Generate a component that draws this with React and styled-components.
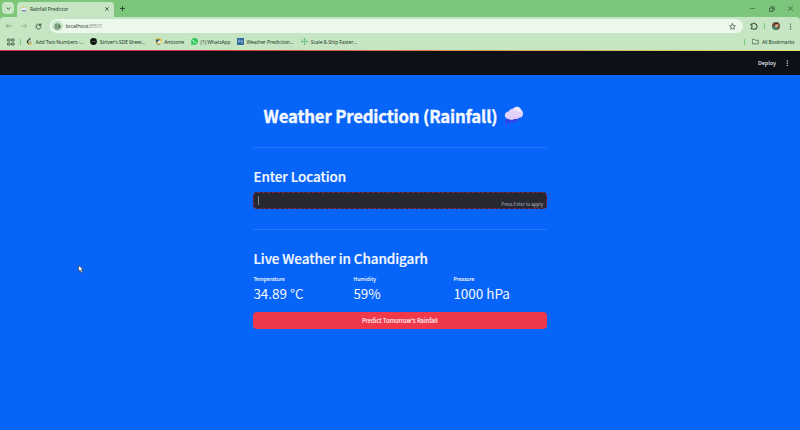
import React from "react";
import styled, { createGlobalStyle } from "styled-components";

const Global = createGlobalStyle`
  * { box-sizing: border-box; }
  html, body { margin: 0; background: #0664f8; }
  body { width: 800px; height: 430px; overflow: hidden; }
  h1, h2 { margin: 0; }
  svg { display: block; flex: none; }
`;
const ui = `"Open Sans", "Noto Sans", sans-serif`;
const source = `"Noto Sans CJK JP", "Noto Sans CJK SC", sans-serif`;

const Page = styled.div`
  width: 800px; height: 430px; display: flex; flex-direction: column;
  background: #0664f8; overflow: hidden; position: relative;
`;
const TabStrip = styled.div`
  height: 17px; flex: none; display: flex; background: #7cc67c;
`;
const TabMenu = styled.div`
  width: 12px; height: 12px; margin: 2px 0 0 2px; border-radius: 4px; background: #c5e7c4;
  display: flex; align-items: center; justify-content: center;
`;
const Tab = styled.div`
  width: 97px; height: 15px; margin: 2px 0 0 3px; padding: 0 5px 2px 4px;
  border-radius: 4px 4px 0 0; background: #c5e5c3; display: flex; align-items: center;
`;
const Label = styled.span`
  font: 400 5.1px/8px ${ui}; color: #223323; white-space: nowrap;
  width: ${(p) => p.$w}px; margin-left: ${(p) => p.$gap || 0}px;
  letter-spacing: -0.13px; flex: none;
`;
const TabTitle = styled(Label)`flex: 1;`;
const NewTab = styled.div`margin: 5.5px 0 0 6px;`;
const WindowControls = styled.div`
  margin: 4.5px 7px 0 auto; height: 8px; display: flex; gap: 13.5px; align-items: center;
`;
const Toolbar = styled.div`
  height: 18px; flex: none; background: #c5e5c3; border-radius: 4px 4px 0 0;
  display: flex; align-items: center; padding: 0 6px 0 5px;
`;
const ToolbarBack = styled.div`background: #7cc67c; flex: none;`;
const NavButtons = styled.div`display: flex; gap: 7px; width: 45px; align-items: center;`;
const AddressBar = styled.div`
  width: 692.5px; height: 14.5px; border-radius: 8px; background: #edf8ed;
  display: flex; align-items: center; padding: 0 6.5px 0 2px;
`;
const SiteInfo = styled.div`
  width: 10.5px; height: 10.5px; border-radius: 50%; background: #c0e4c0;
  display: flex; align-items: center; justify-content: center;
`;
const Url = styled.span`
  font: 400 5.7px/9px ${ui}; color: #2c382c; margin-left: 3px; flex: 1; letter-spacing: -0.1px;
`;
const Port = styled.span`color: #7d8c7d;`;
const ToolActions = styled.div`
  flex: 1; display: flex; align-items: center; padding-left: 7px;
`;
const Avatar = styled.div`margin: 0 auto 0 0;`;
const Divider = styled.div`
  width: 1px; height: 6px; background: #79cc79; flex: none; margin: 0 ${(p) => p.$m || 0}px;
`;
const Bookmarks = styled.div`
  height: 15px; flex: none; background: #c5e5c3; display: flex; align-items: center;
  padding: 0 6px 2px 7px;
`;
const BookmarkGroup = styled.div`display: flex; align-items: center; margin-left: auto;`;
const LoadBar = styled.div`
  height: 1px; flex: none;
  background: linear-gradient(90deg, #d0303c 0 25%, #d75a40 40%, #d9a650 65%, #e4e66c);
`;
const AppHeader = styled.div`
  height: 24px; flex: none; background: #0d1117; color: #e8eaed;
  display: flex; align-items: center; justify-content: flex-end; padding-right: 10px;
  font: 500 5.4px/8px ${source};
`;
const MenuDots = styled.div`margin-left: 7.5px;`;
const Main = styled.main`
  width: 293.5px; margin-left: 253px; color: #f4f8ff; font-family: ${source};
  display: flex; flex-direction: column;
`;
const Title = styled.h1`
  height: 26px; margin-top: 28px; display: flex; align-items: center; padding-left: 10.5px;
  font-size: 16.8px; font-weight: 700; line-height: 26px; white-space: nowrap;
`;
const TitleText = styled.span`
  width: 240px; letter-spacing: -0.18px; -webkit-text-stroke: 0.35px currentColor;
`;
const TitleIcon = styled.div`margin-bottom: 3px;`;
const Rule = styled.div`height: 1px; background: #2277f6; margin-top: ${(p) => p.$top}px;`;
const Heading = styled.h2`
  height: 20px; margin-top: ${(p) => p.$top}px; font-size: 13.5px; font-weight: 500;
  line-height: 20px; white-space: nowrap; letter-spacing: -0.08px; padding-left: 0.4px;
  -webkit-text-stroke: 0.2px currentColor;
`;
const Input = styled.div`
  height: 17px; margin-top: 6px; border: 1px dashed #82204f; border-radius: 4px;
  background: #262730; display: flex; justify-content: space-between; padding: 0 2.5px 0 4px;
`;
const Caret = styled.div`width: 1.3px; height: 9px; margin-top: 3px; background: #85878e;`;
const Hint = styled.span`
  margin-top: 7px; font: 400 4.5px/8px ${source}; color: #b7b9c1;
`;
const Metrics = styled.div`
  display: grid; grid-template-columns: 100px 100px 1fr; height: 33px; margin-top: 6px;
  padding-left: 0.4px;
`;
const MetricLabel = styled.div`
  font-size: 5.2px; line-height: 10px; font-weight: 400; -webkit-text-stroke: 0.1px currentColor;
`;
const MetricValue = styled.div`
  font-size: 13.5px; line-height: 19px; font-weight: 400; white-space: nowrap;
  letter-spacing: -0.03px;
`;
const Button = styled.div`
  height: 17px; margin-top: 5px; border-radius: 4px; background: #ef394a; color: #fff;
  text-align: center; font-size: 5.9px; line-height: 17px; font-weight: 400;
  -webkit-text-stroke: 0.1px currentColor;
`;
const Cursor = styled.div`position: absolute; left: 78px; top: 265px;`;

const Icon = ({ w = 8, h = w, box = "0 0 24 24", sw = 2.4, color = "#304330", children }) => (
  <svg width={w} height={h} viewBox={box} fill="none" stroke={color} strokeWidth={sw}
    strokeLinecap="round" strokeLinejoin="round">{children}</svg>
);
const Dots = ({ color, w = 7 }) => (
  <svg width={w} height={w} viewBox="0 0 7 7" fill={color}>
    <circle cx="3.5" cy="1.1" r=".7" /><circle cx="3.5" cy="3.5" r=".7" /><circle cx="3.5" cy="5.9" r=".7" />
  </svg>
);
const RainCloud = ({ w, h }) => (
  <svg width={w} height={h} viewBox="0 0 20 18">
    <g stroke="#512bd8" strokeWidth="1.7" strokeLinecap="round">
      <path d="M3.8 12.8 2.4 16.6M7.1 13 5.8 16.3M10.6 13.2 9.5 16M13.7 12.5 12.8 14.5" />
    </g>
    <path d="M5 13.2C2.4 13.2.8 11.4.8 9.3c0-2.2 1.7-3.8 3.9-3.9C5.6 3.2 7.4 2.5 9 2.8 10 1.3 11.6.6 13.3.8c2.2.2 3.7 1.6 4.1 3.5 1.2.8 1.8 2 1.7 3.4-.1 2.3-1.7 4-4 4.1-1.2 1.2-2.7 1.5-4.2 1-1.7 1.1-3.8 1.2-5.9.4Z" fill="#e2d3f8" />
    <path d="M9.3 3.2c1.3-2 4.6-2.6 6.5-.8 1.4 1.2 1.3 2.6 1.1 3.6-2 .8-3.2-.5-4.2-1.1Z" fill="#f0e8fd" />
    <path d="M2 11c2.3 1.6 4.8 0 5.8-1.6 1.6 2.5 5 2.5 7.2.3" fill="none" stroke="#d3c0f1" strokeWidth=".8" />
  </svg>
);
const TabCloud = () => (
  <svg width="6" height="6" viewBox="0 0 12 12">
    <circle cx="5" cy="3.5" r="3" fill="#efbf48" />
    <path d="M2 8a2.5 2.5 0 0 1 1-4q3-2 5 0 4 0 3 4Z" fill="#f1eafc" />
    <path d="M2 9.5h8" stroke="#6760df" strokeWidth="2" />
  </svg>
);

const LeetIcon = () => (
  <Icon w={7} sw={3.8} color="#292b29">
    <path d="M14 2 6 10q-3 3 0 6l4 4" /><path d="m10 20 3 2 5-4" stroke="#e8a52e" /><path d="M12 13h8" stroke="#9ba69b" />
  </Icon>
);
const StriverIcon = () => (
  <svg width="7" height="7" viewBox="0 0 14 14"><circle cx="7" cy="7" r="6.8" fill="#111512" />
    <path d="M3 7h3M7.5 6v2M9 7h2.5" stroke="#8e968e" strokeWidth="1.1" /></svg>
);
const AmizoneIcon = () => (
  <svg width="7" height="7" viewBox="0 0 14 14"><path d="M1 2 7 0l6 2v6q-2 5-6 6-4-1-6-6Z" fill="#edbc2e" />
    <path d="M2 3h8v4L2 9Z" fill="#285b88" /><path d="m5 7 5-3 2 5-5 3Z" fill="#e8eee2" /><path d="M2 10q5 4 10 0l-5 4Z" fill="#2e6594" /></svg>
);
const WhatsIcon = () => (
  <svg width="7" height="7" viewBox="0 0 14 14"><path d="m0 14 1-4a7 7 0 1 1 3 3Z" fill="#30c65a" />
    <path d="M4 4q1-1 2 1l-1 1q1 2 3 3l1-1q3 1 1 2-2 1-5-2T4 4Z" fill="#fff" /></svg>
);
const WeatherIcon = () => (
  <svg width="7" height="7" viewBox="0 0 14 14"><path d="M0 0h14v14H0Z" fill="#326d9e" />
    <path d="M3 10V4h3v3H3M8 4v3h3V4M11 7v3H8" fill="none" stroke="#a3c3d4" strokeWidth="1.1" /></svg>
);
const ScaleIcon = () => (
  <Icon w={7} color="#49b66e" sw={2.2}><path d="M12 1v22M1 12h22M9 4l3-3 3 3M9 20l3 3 3-3M4 9l-3 3 3 3M20 9l3 3-3 3" /></Icon>
);

const metrics = [
  ["Temperature", "34.89 °C"], ["Humidity", "59%"], ["Pressure", "1000 hPa"],
];
const bookmarks = [
  [LeetIcon, "Add Two Numbers -...", 48, 0],
  [StriverIcon, "Striver's SDE Sheet...", 45, 7],
  [AmizoneIcon, "Amizone", 20, 10],
  [WhatsIcon, "(1) WhatsApp", 30, 7],
  [WeatherIcon, "Weather Prediction...", 46, 6.5],
  [ScaleIcon, "Scale & Ship Faster...", 46, 9],
];
const BookmarkItem = styled.div`
  display: flex; align-items: center; gap: 2.4px; margin-left: ${(p) => p.$gap}px;
`;

export default function App() {
  return (
    <Page>
      <Global />
      <TabStrip>
        <TabMenu><Icon w={5} sw={4}><path d="m5 9 7 7 7-7" /></Icon></TabMenu>
        <Tab>
          <TabCloud />
          <TabTitle $gap={3}>Rainfall Predictor</TabTitle>
          <Icon w={4} sw={4} color="#203020"><path d="m3 3 18 18M21 3 3 21" /></Icon>
        </Tab>
        <NewTab><Icon w={5} sw={3.8} color="#203020"><path d="M12 1v22M1 12h22" /></Icon></NewTab>
        <WindowControls>
          <Icon w={5}><path d="M2 12h20" /></Icon>
          <Icon w={6} sw={3}><path d="M3 8h13v13H3ZM8 3h10q3 0 3 3v10" /></Icon>
          <Icon w={5} sw={3.2}><path d="m2 2 20 20M22 2 2 22" /></Icon>
        </WindowControls>
      </TabStrip>
      <ToolbarBack>
        <Toolbar>
          <NavButtons>
            <Icon color="#6d8b6f" sw={2}><path d="M20 12H4M10 6l-6 6 6 6" /></Icon>
            <Icon color="#82a083" sw={2}><path d="M4 12h16M14 6l6 6-6 6" /></Icon>
            <Icon w={7} sw={3}><path d="M19 7a8.5 8.5 0 1 0 1.5 7M20 3v6h-6" /></Icon>
          </NavButtons>
          <AddressBar>
            <SiteInfo><Icon w={7} sw={2.4}><circle cx="12" cy="12" r="9" /><path d="M8 10h8M8 14h8" /></Icon></SiteInfo>
            <Url>localhost:<Port>8501</Port></Url>
            <Icon w={7} sw={2.2}><path d="m12 2 3 7 7 .6-5.3 4.8 1.6 7.1L12 18l-6.3 3.5 1.6-7.1L2 9.6 9 9Z" /></Icon>
          </AddressBar>
          <ToolActions>
            <Icon w={8} sw={3}><path d="M4 6h5q0-3 3-3t3 3h4v5q3 0 3 3t-3 3v4H4v-5q3 0 3-3t-3-3Z" /></Icon>
            <Divider $m={6.5} />
            <Avatar>
              <svg width="8" height="8" viewBox="0 0 16 16">
                <circle cx="8" cy="8" r="8" fill="#6f5140" /><path d="M1 10a7 7 0 0 0 11 4l-3-5Z" fill="#2d9171" />
                <circle cx="9" cy="7" r="4" fill="#d8a07a" /><path d="M4 8q0-6 5-6 4 0 5 3L8 4Z" fill="#3a2b24" />
              </svg>
            </Avatar>
            <Dots color="#304330" />
          </ToolActions>
        </Toolbar>
      </ToolbarBack>
      <Bookmarks>
        <Icon w={8} sw={3} color="#53684f"><path d="M3 3h6v6H3ZM15 3h6v6h-6ZM3 15h6v6H3ZM15 15h6v6h-6Z" /></Icon>
        <Divider $m={5} />
        {bookmarks.map(([Glyph, text, w, gap]) => (
          <BookmarkItem key={text} $gap={gap}><Glyph /><Label $w={w}>{text}</Label></BookmarkItem>
        ))}
        <BookmarkGroup>
          <Divider $m={7} />
          <Icon w={7} sw={2}><path d="M2 5h7l3 3h10v12H2Z" /></Icon>
          <Label $gap={3} $w={32}>All Bookmarks</Label>
        </BookmarkGroup>
      </Bookmarks>
      <LoadBar />
      <AppHeader>Deploy<MenuDots><Dots color="#e8eaed" w={6.5} /></MenuDots></AppHeader>
      <Main>
        <Title><TitleText>Weather Prediction (Rainfall)</TitleText><TitleIcon><RainCloud w={20} h={18} /></TitleIcon></Title>
        <Rule $top={18} />
        <Heading $top={18}>Enter Location</Heading>
        <Input><Caret /><Hint>Press Enter to apply</Hint></Input>
        <Rule $top={20} />
        <Heading $top={18}>Live Weather in Chandigarh</Heading>
        <Metrics>
          {metrics.map(([name, value]) => (
            <div key={name}><MetricLabel>{name}</MetricLabel><MetricValue>{value}</MetricValue></div>
          ))}
        </Metrics>
        <Button>Predict Tomorrow's Rainfall</Button>
      </Main>
      <Cursor>
        <svg width="6" height="8" viewBox="0 0 12 16"><path d="M1 1v12l3-3 2 5 3-1-2-5h4Z" fill="#fff" stroke="#38404c" strokeWidth="1.4" /></svg>
      </Cursor>
    </Page>
  );
}
